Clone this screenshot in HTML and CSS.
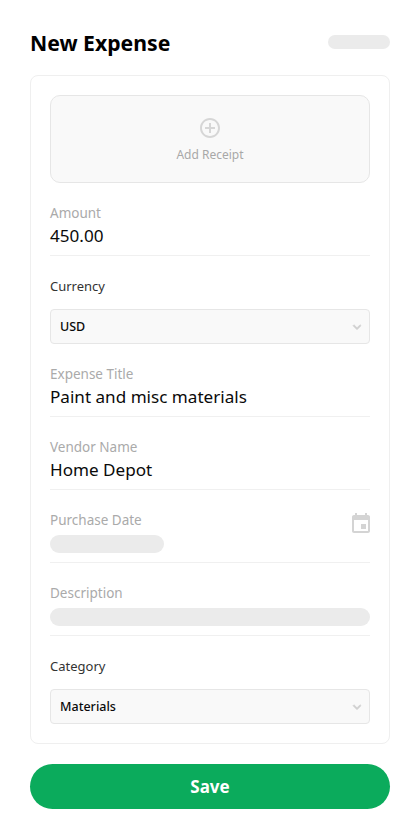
FILE: index.html
```html
<!DOCTYPE html>
<html lang="en">
<head>
<meta charset="utf-8">
<title>New Expense</title>
<link rel="stylesheet" href="styles.css">
</head>
<body>
<main class="page">
  <header class="header">
    <h1 class="title">New Expense</h1>
    <div class="pill pill-header"></div>
  </header>
  <section class="card">
    <div class="upload">
      <svg class="plus" viewBox="0 0 24 24" width="24" height="24" aria-hidden="true"><path d="M13 7h-2v4H7v2h4v4h2v-4h4v-2h-4V7zm-1-5C6.48 2 2 6.48 2 12s4.48 10 10 10 10-4.48 10-10S17.52 2 12 2zm0 18c-4.41 0-8-3.59-8-8s3.59-8 8-8 8 3.590 8 8-3.590 8-8 8z"/></svg>
      <span class="upload-text">Add Receipt</span>
    </div>
    <div class="field">
      <div class="label">Amount</div>
      <div class="value">450.00</div>
    </div>
    <div class="select-group">
      <div class="select-label">Currency</div>
      <div class="select"><span>USD</span><svg class="chev" viewBox="0 0 24 24" width="16" height="16" aria-hidden="true"><path d="M7.41 8.59 12 13.170l4.590-4.580L18 10l-6 6-6-6z"/></svg></div>
    </div>
    <div class="field">
      <div class="label">Expense Title</div>
      <div class="value">Paint and misc materials</div>
    </div>
    <div class="field">
      <div class="label">Vendor Name</div>
      <div class="value">Home Depot</div>
    </div>
    <div class="field">
      <div class="label">Purchase Date</div>
      <div class="pill pill-date"></div>
      <svg class="cal" viewBox="0 0 24 24" width="24" height="24" aria-hidden="true"><path d="M17 12h-5v5h5v-5zM16 1v2H8V1H6v2H5c-1.110 0-1.990.9-1.990 2L3 19c0 1.100.89 2 2 2h14c1.100 0 2-.9 2-2V5c0-1.100-.9-2-2-2h-1V1h-2zm3 18H5V8h14v11z"/></svg>
    </div>
    <div class="field">
      <div class="label">Description</div>
      <div class="pill pill-desc"></div>
    </div>
    <div class="select-group">
      <div class="select-label">Category</div>
      <div class="select"><span>Materials</span><svg class="chev" viewBox="0 0 24 24" width="16" height="16" aria-hidden="true"><path d="M7.41 8.59 12 13.170l4.590-4.580L18 10l-6 6-6-6z"/></svg></div>
    </div>
  </section>
  <button class="save" type="button">Save</button>
</main>
</body>
</html>
```

FILE: styles.css
```css
* { box-sizing: border-box; }
html, body { margin: 0; padding: 0; background: #fff; }
body { font-family: "Noto Sans", "Open Sans", sans-serif; color: #000; }
.page { width: 420px; height: 839px; padding: 30px 30px 0; overflow: hidden; }
.header { display: flex; justify-content: space-between; align-items: flex-start; height: 45px; }
.title { margin: 0; font-size: 21.2px; line-height: 26px; font-weight: 700; }
.pill { background: #ebebeb; border-radius: 999px; }
.pill-header { width: 62px; height: 14px; margin-top: 5px; }
.card { border: 1px solid #efefef; border-radius: 8px; padding: 19px; height: 669px; }
.upload { height: 88px; border: 1px solid #e6e6e6; border-radius: 10px; background: #f9f9f9; display: flex; flex-direction: column; align-items: center; padding-top: 20px; }
.plus { fill: #d6d6d6; display: block; }
.upload-text { font-size: 12px; line-height: 16px; color: #a8a8a8; margin-top: 7px; }
.field { position: relative; height: 73px; padding-top: 21px; border-bottom: 1px solid #f0f0f0; }
.label { font-size: 13.5px; line-height: 18px; color: #aaa; }
.value { font-size: 17.1px; line-height: 23px; margin-top: 2px; color: #0a0a0a; }
.select-group { height: 88px; padding-top: 21px; }
.select-label { font-size: 13px; line-height: 18px; color: #333; }
.select { margin-top: 14px; height: 35px; border: 1px solid #e6e6e6; border-radius: 4px; background: #f9f9f9; display: flex; align-items: center; justify-content: space-between; padding: 0 4px 0 9px; font-size: 12.5px; font-weight: 500; color: #0a0a0a; }
.chev { fill: #d0d0d0; stroke: #d0d0d0; stroke-width: 1; display: block; }
.pill-date { width: 114px; height: 18px; margin-top: 6px; }
.pill-desc { width: 100%; height: 18px; margin-top: 6px; }
.cal { position: absolute; right: -3px; top: 22px; fill: #d4d4d4; }
.save { display: block; width: 360px; height: 45px; margin-top: 20px; border: 0; border-radius: 23px; background: #0bab5c; color: #fff; font-family: inherit; font-size: 17px; font-weight: 700; }
```
